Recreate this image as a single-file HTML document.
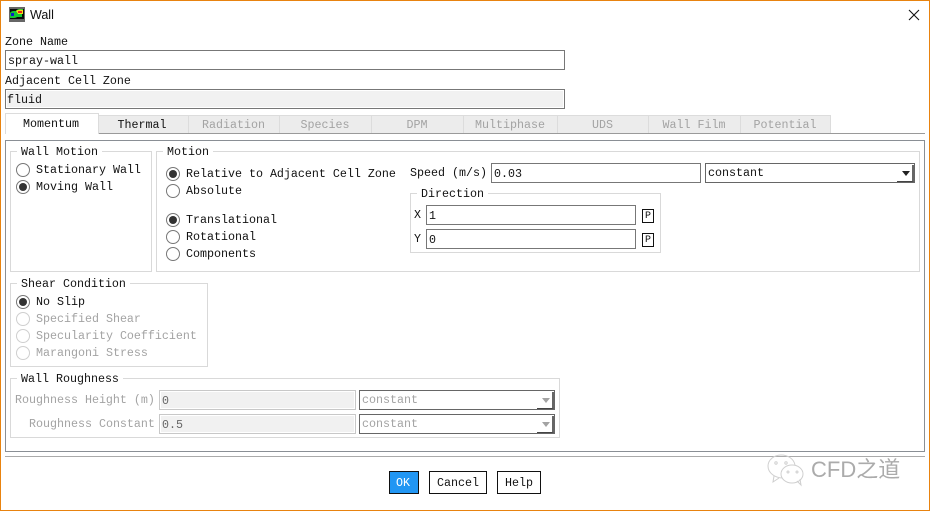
<!DOCTYPE html>
<html>
<head>
<meta charset="utf-8">
<style>
html,body{margin:0;padding:0;background:#fff}
#r{position:relative;width:930px;height:511px;overflow:hidden;background:#fff;font-family:"Liberation Mono",monospace;font-size:11.67px;color:#111}
#r div,#r span.t{position:absolute;box-sizing:border-box}
.t{line-height:16px;white-space:pre;color:#111}
.g{color:#a3a3a3 !important}
.box{border:1px solid #d9d9d9}
.leg{background:#fff;padding:0 4px;line-height:14px;white-space:pre;height:14px}
.in{border:1px solid #777;background:#fff;line-height:20px;padding-left:2px;white-space:pre;height:20px}
.dis{background:#f1f1f1;box-shadow:inset 0 0 0 1px #fff}
.dl{border-color:#c8c8c8;color:#666}
.dd{border:1px solid #666;background:#fff;height:20px;line-height:18px;padding-left:2px;white-space:pre}
.dd i{position:absolute;right:0;bottom:0;width:17px;height:17px;border-right:2px solid #666;border-bottom:1px solid #444;box-sizing:border-box}
.dd b{position:absolute;right:4px;bottom:6px;width:0;height:0;border-left:4px solid transparent;border-right:4px solid transparent;border-top:5px solid #222}
.dd.off{color:#a3a3a3}
.dd.off b{border-top-color:#a3a3a3}
.rd{width:14px;height:14px;border:1px solid #777;border-radius:50%;background:#fff}
.rd.on::after{content:"";position:absolute;left:2px;top:2px;width:8px;height:8px;border-radius:50%;background:#333}
.rd.off{border-color:#cfcfcf}
.tab{top:115px;height:18px;border:1px solid #dcdcdc;border-left:0;border-bottom:0;background:#ececec;text-align:center;line-height:18px;color:#a3a3a3;white-space:pre;padding-right:1px}
.btn{top:471px;height:23px;border:1px solid #111;background:#fff;text-align:center;line-height:22px}
.p{left:642px;width:12px;height:14px;border:1px solid #111;font-size:10px;line-height:13px;text-align:center}
</style>
</head>
<body>
<div id="r">
<div style="left:0;top:0;width:930px;height:511px;border:1px solid #e8830f"></div>

<svg style="position:absolute;left:9px;top:7px" width="16" height="15" viewBox="0 0 16 15"><rect width="16" height="15" fill="#666"/><rect x="1" y="2" width="14" height="10" fill="#0a0a0a"/><path d="M1 6q1-2 4-2h2q1-2 4-2h3v5h-1v3H8q-1 1-4 1H1z" fill="#14c832"/><path d="M7 4q2-2 7-1v4H9q-1-2-2-3z" fill="#f5e015"/><rect x="9" y="4" width="4" height="2" fill="#e8231a"/><rect x="2" y="6" width="3" height="3" fill="#0d1fc8"/></svg>
<div style="left:30px;top:7px;font-family:'Liberation Sans',sans-serif;font-size:12.5px;line-height:16px;color:#111">Wall</div>
<svg style="position:absolute;left:908px;top:9px" width="12" height="12" viewBox="0 0 12 12"><path d="M1 1L11 11M11 1L1 11" stroke="#111" stroke-width="1.1" fill="none"/></svg>

<span class="t" style="left:5px;top:34px">Zone Name</span>
<div class="in" style="left:5px;top:50px;width:560px">spray-wall</div>
<span class="t" style="left:5px;top:73px">Adjacent Cell Zone</span>
<div class="in dis" style="left:5px;top:89px;width:560px;padding-left:1px">fluid</div>

<div style="left:5px;top:133px;width:920px;height:1px;background:#9a9a9a"></div>
<div class="tab" style="left:5px;top:113px;width:94px;height:21px;background:#fff;color:#111;border-left:1px solid #dcdcdc;line-height:21px;padding-right:2px">Momentum</div>
<div class="tab" style="left:99px;width:90px;color:#111;padding-right:3px">Thermal</div>
<div class="tab" style="left:189px;width:91px">Radiation</div>
<div class="tab" style="left:280px;width:92px">Species</div>
<div class="tab" style="left:372px;width:92px">DPM</div>
<div class="tab" style="left:464px;width:94px">Multiphase</div>
<div class="tab" style="left:558px;width:91px">UDS</div>
<div class="tab" style="left:649px;width:92px">Wall Film</div>
<div class="tab" style="left:741px;width:90px">Potential</div>

<div style="left:5px;top:140px;width:920px;height:312px;border:1px solid #8a8f95"></div>
<div style="left:5px;top:456px;width:920px;height:1px;background:#aaa"></div>

<!-- Wall Motion -->
<div class="box" style="left:10px;top:151px;width:142px;height:121px"></div>
<div class="leg" style="left:17px;top:145px">Wall Motion</div>
<div class="rd" style="left:16px;top:163px"></div><span class="t" style="left:36px;top:162px">Stationary Wall</span>
<div class="rd on" style="left:16px;top:180px"></div><span class="t" style="left:36px;top:179px">Moving Wall</span>

<!-- Motion -->
<div class="box" style="left:156px;top:151px;width:764px;height:121px"></div>
<div class="leg" style="left:163px;top:145px">Motion</div>
<div class="rd on" style="left:166px;top:167px"></div><span class="t" style="left:186px;top:166px">Relative to Adjacent Cell Zone</span>
<div class="rd" style="left:166px;top:184px"></div><span class="t" style="left:186px;top:183px">Absolute</span>
<div class="rd on" style="left:166px;top:213px"></div><span class="t" style="left:186px;top:212px">Translational</span>
<div class="rd" style="left:166px;top:230px"></div><span class="t" style="left:186px;top:229px">Rotational</span>
<div class="rd" style="left:166px;top:247px"></div><span class="t" style="left:186px;top:246px">Components</span>

<span class="t" style="left:410px;top:165px">Speed (m/s)</span>
<div class="in" style="left:491px;top:163px;width:210px">0.03</div>
<div class="dd" style="left:705px;top:163px;width:210px">constant<i></i><b></b></div>

<div class="box" style="left:410px;top:193px;width:251px;height:60px"></div>
<div class="leg" style="left:417px;top:187px">Direction</div>
<span class="t" style="left:414px;top:207px">X</span>
<div class="in" style="left:426px;top:205px;width:210px">1</div>
<div class="p" style="top:209px">P</div>
<span class="t" style="left:414px;top:231px">Y</span>
<div class="in" style="left:426px;top:229px;width:210px">0</div>
<div class="p" style="top:233px">P</div>

<!-- Shear -->
<div class="box" style="left:10px;top:283px;width:198px;height:84px"></div>
<div class="leg" style="left:17px;top:277px">Shear Condition</div>
<div class="rd on" style="left:16px;top:295px"></div><span class="t" style="left:36px;top:294px">No Slip</span>
<div class="rd off" style="left:16px;top:312px"></div><span class="t g" style="left:36px;top:311px">Specified Shear</span>
<div class="rd off" style="left:16px;top:329px"></div><span class="t g" style="left:36px;top:328px">Specularity Coefficient</span>
<div class="rd off" style="left:16px;top:346px"></div><span class="t g" style="left:36px;top:345px">Marangoni Stress</span>

<!-- Roughness -->
<div class="box" style="left:10px;top:378px;width:550px;height:60px"></div>
<div class="leg" style="left:17px;top:372px">Wall Roughness</div>
<span class="t g" style="left:15px;top:392px">Roughness Height (m)</span>
<div class="in dis dl" style="left:159px;top:390px;width:197px">0</div>
<div class="dd off" style="left:359px;top:390px;width:196px">constant<i></i><b></b></div>
<span class="t g" style="left:29px;top:416px">Roughness Constant</span>
<div class="in dis dl" style="left:159px;top:414px;width:197px">0.5</div>
<div class="dd off" style="left:359px;top:414px;width:196px">constant<i></i><b></b></div>

<!-- Buttons -->
<div class="btn" style="left:389px;width:30px;background:#2196f3;color:#fff;padding-right:2px">OK</div>
<div class="btn" style="left:429px;width:58px">Cancel</div>
<div class="btn" style="left:497px;width:44px">Help</div>

<!-- Watermark -->
<svg style="position:absolute;left:766px;top:453px" width="40" height="34" viewBox="0 0 40 34" fill="none" stroke="#cfcfcf" stroke-width="1"><path d="M17 25C9 25 2 20 2 13C2 7 8 2 15 2C22 2 28 6 29 12"/><path d="M8 23L7 29L13 25"/><ellipse cx="26" cy="21" rx="11" ry="9" fill="#fff"/><path d="M31 28L35 32L34 26"/><circle cx="10" cy="10" r="1.2"/><circle cx="20" cy="10" r="1.2"/><circle cx="22" cy="19" r="1"/><circle cx="31" cy="19" r="1"/></svg>
<div style="left:811px;top:456px;font-family:'Liberation Sans','Noto Sans CJK SC',sans-serif;font-size:22px;line-height:28px;color:#ababab;white-space:pre">CFD之道</div>
</div>
</body>
</html>
